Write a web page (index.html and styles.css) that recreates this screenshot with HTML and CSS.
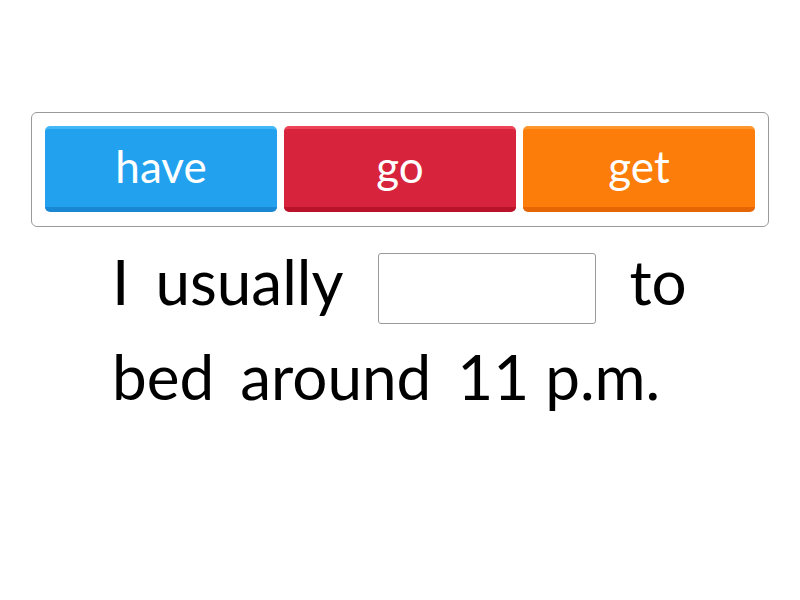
FILE: index.html
```html
<!DOCTYPE html>
<html>
<head>
<meta charset="utf-8">
<link rel="stylesheet" href="styles.css">
</head>
<body>
<div class="page">
  <div class="tray">
    <div class="tile blue">have</div>
    <div class="tile red">go</div>
    <div class="tile orange">get</div>
  </div>
  <div class="sentence">
    <span class="word">I</span>
    <span class="word">usually</span>
    <span class="slot"></span>
    <span class="word">to</span>
    <span class="word">bed</span>
    <span class="word">around</span>
    <span class="word">11 p.m.</span>
  </div>
</div>
</body>
</html>
```
FILE: styles.css
```css
html, body {
  margin: 0;
  padding: 0;
  background: #ffffff;
}
.page {
  width: 800px;
  height: 600px;
  padding-top: 112px;
  box-sizing: border-box;
  font-family: Lato, "Noto Sans", sans-serif;
}
.tray {
  margin-left: 31px;
  width: 738px;
  height: 115px;
  box-sizing: border-box;
  border: 1px solid #9a9a9a;
  border-radius: 6px;
  padding: 13px;
  display: flex;
  gap: 7px;
}
.tile {
  width: 232px;
  height: 86px;
  border-radius: 5px;
  box-sizing: border-box;
  display: flex;
  align-items: center;
  justify-content: center;
  color: #ffffff;
  font-size: 44px;
  padding-bottom: 4px;
}
.blue {
  background: #22a1ee;
  border-top: 3px solid #44b8f7;
  border-bottom: 5px solid #1a87d2;
}
.red {
  background: #d7233b;
  border-top: 3px solid #ee4257;
  border-bottom: 5px solid #b8132a;
}
.orange {
  background: #fd7d0a;
  border-top: 3px solid #ff952c;
  border-bottom: 5px solid #e56604;
}
.sentence {
  margin-left: 112px;
  width: 590px;
  margin-top: 7px;
  display: flex;
  flex-wrap: wrap;
  align-items: center;
  column-gap: 26px;
  font-size: 62px;
  color: #000000;
  line-height: 95px;
}
.slot {
  width: 218px;
  height: 71px;
  box-sizing: border-box;
  border: 1px solid #9a9a9a;
  border-radius: 3px;
  margin: 13px 7px 0 9px;
}
```
